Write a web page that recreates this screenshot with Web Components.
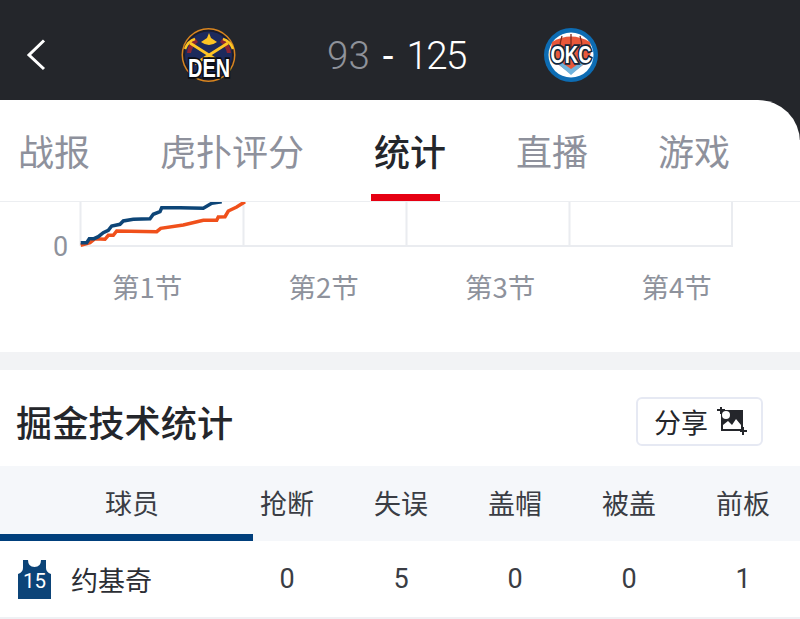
<!DOCTYPE html>
<html lang="zh">
<head>
<meta charset="utf-8">
<title>统计</title>
<style>
  html, body { margin: 0; padding: 0; background: #fff; }
  body { width: 800px; height: 619px; overflow: hidden; font-family: "Noto Sans CJK SC", "Noto Sans", sans-serif; }
</style>
</head>
<body>
<score-header home="93" away="125"></score-header>
<tab-bar></tab-bar>
<quarter-chart></quarter-chart>
<stats-section title-text="掘金技术统计">
  <player-row number="15" name="约基奇" values="0,5,0,0,1"></player-row>
</stats-section>

<script>
const FONT = '"Noto Sans CJK SC", "Noto Sans", sans-serif';

class ScoreHeader extends HTMLElement {
    constructor() {
        super();
        this.attachShadow({ mode: 'open' });
    }

    connectedCallback() {
        const home = this.getAttribute('home');
        const away = this.getAttribute('away');
        this.shadowRoot.innerHTML = `
      <style>
        :host { display: block; height: 140px; margin-bottom: -40px; background: #24262b; }
        .bar { height: 100px; display: grid; grid-template-columns: 181px 56px 306px 56px; align-items: center; position: relative; }
        .back { position: absolute; left: 26px; top: 39px; display: block; }
        .logo { display: block; margin-top: 14px; overflow: visible; }
        .score { display: flex; justify-content: center; align-items: center; gap: 13px; font: 300 38.500px/44px Roboto, sans-serif; color: #fff; margin: 11px 0 0 13px; }
        .home { color: #8f929a; }
        .dash { font-weight: 400; }
        .away { letter-spacing: -1.5px; }
      </style>
      <div class="bar">
        <svg class="back" width="20" height="32" viewBox="0 0 20 32"><path d="M18 1.5 L3 16 L18 30" fill="none" stroke="#fff" stroke-width="3"/></svg>
        <span></span>
        <svg class="logo" width="56" height="58" viewBox="0 0 56 58">
          <circle cx="27.500" cy="27" r="27" fill="#d9851f"/>
          <circle cx="27.500" cy="27" r="25.500" fill="#1b1d2c"/>
          <circle cx="27.500" cy="27" r="23.500" fill="#1d2a5c"/>
          <path d="M6 25 A22 22 0 0 1 14 10 L17 14 A18 18 0 0 0 10 25Z M50 25 A22 22 0 0 0 42 10 L39 14 A18 18 0 0 1 46 25Z" fill="#8a2433"/>
          <path d="M20 14 L26 10 L28 5 L30 10 L36 14 Q28 20 20 14Z" fill="#fec524"/>
          <path d="M9 15 L42 36 M47 15 L14 36" stroke="#fec524" stroke-width="2.800"/>
          <path d="M4 21 Q7 13 14 11 M52 21 Q49 13 42 11" stroke="#fec524" stroke-width="2.400" fill="none"/>
          <text transform="translate(28 49) scale(.765 1)" text-anchor="middle" font-family="Liberation Sans" font-weight="700" font-size="26" fill="#fff" stroke="#0c0d12" stroke-width="3.500" paint-order="stroke">DEN</text>
        </svg>
        <div class="score"><span class="home">${home}</span><span class="dash">-</span><span class="away">${away}</span></div>
        <svg class="logo" width="56" height="58" viewBox="0 0 56 58">
          <circle cx="28" cy="27" r="27" fill="#0d6cb3"/>
          <circle cx="28" cy="27" r="22.500" fill="#fff"/>
          <path d="M9 14 Q28 3 47 14 Q50 26 44 34 L28 46 L12 34 Q6 26 9 14Z" fill="#e9583a"/>
          <path d="M19 8 Q15 20 19 30 M37 8 Q41 20 37 30 M28 6 V26 M10 19 H46" stroke="#7b2a1e" stroke-width="1.300" fill="none"/>
          <path d="M14 35 L28 47 L42 35 L38 34 L28 41 L18 34Z" fill="#6fb3dd"/>
          <text transform="translate(28 35) scale(.8 1)" text-anchor="middle" font-family="Liberation Sans" font-weight="700" font-size="23" fill="#fff" stroke="#12263c" stroke-width="3.500" paint-order="stroke">OKC</text>
        </svg>
      </div>
    `;
    }
}

class TabBar extends HTMLElement {
    constructor() {
        super();
        this.attachShadow({ mode: 'open' });
    }

    connectedCallback() {
        const tabs = ['战报', '虎扑评分', '统计', '直播', '游戏'];
        this.shadowRoot.innerHTML = `
      <style>
        :host { display: block; position: relative; height: 101px; background: #fff; border-top-right-radius: 42px; font-family: ${FONT}; }
        .tabs { display: flex; gap: 70px; padding-left: 18px; height: 100px; box-sizing: border-box; }
        .tab { font-size: 36px; line-height: 100px; color: #8e919c; position: relative; white-space: nowrap; }
        .tab.on { color: #24262b; font-weight: 500; }
        .tab.on::after { content: ''; position: absolute; left: -3px; right: 6px; top: 94px; height: 7px; background: #e60012; }
      </style>
      <div class="tabs">
        ${tabs.map(t => `<div class="tab${t === '统计' ? ' on' : ''}">${t}</div>`).join('')}
      </div>
    `;
    }
}

class QuarterChart extends HTMLElement {
    constructor() {
        super();
        this.attachShadow({ mode: 'open' });
    }

    connectedCallback() {
        const labels = ['第1节', '第2节', '第3节', '第4节'];
        this.shadowRoot.innerHTML = `
      <style>
        :host { display: block; height: 151px; border-top: 1px solid #eceef1; box-sizing: border-box; font-family: ${FONT}; position: relative; }
        svg { display: block; position: absolute; left: 0; top: 0; }
        .zero { position: absolute; left: 53px; top: 29px; font: 400 27px Roboto, sans-serif; line-height: 32px; color: #8e929c; }
        .labels { position: absolute; left: 59px; top: 65px; display: grid; grid-template-columns: repeat(4, 176.5px); }
        .labels div { text-align: center; font-size: 27.5px; line-height: 38px; color: #8e929c; }
      </style>
      <svg width="800" height="60" viewBox="0 202 800 60">
        <path d="M80.500 201V246 M243.500 201V246 M406.500 201V246 M569.500 201V246 M732 201V246 M80 246H733" stroke="#eaecf0" stroke-width="2" fill="none"/>
        <polyline points="80.7,245.3 90,242.7 95,238.7 105,239.3 108.3,235.3 113.3,235.3 116.7,231 156.7,231.7 160.7,228.3 183.3,225 203.3,220.3 216.7,220.3 218.3,217 225,216.7 228.3,211 236.7,207 245,201.7" fill="none" stroke="#f0501b" stroke-width="3.500"/>
        <polyline points="80.7,242.7 86.7,242.7 89.3,238.7 94,238.7 98.3,236.7 103.3,232.7 108.3,230.3 111.7,226 120,224.3 123.3,221 133.3,219.3 150,218.7 153.3,214.3 160,211.7 161.7,207.7 180,207.7 203.3,208.3 211.7,203.3 221.7,201.7" fill="none" stroke="#0d4577" stroke-width="3.500"/>
      </svg>
      <div class="zero">0</div>
      <div class="labels">${labels.map(l => `<div>${l}</div>`).join('')}</div>
    `;
    }
}

class StatsSection extends HTMLElement {
    constructor() {
        super();
        this.attachShadow({ mode: 'open' });
    }

    connectedCallback() {
        const heads = ['抢断', '失误', '盖帽', '被盖', '前板'];
        this.shadowRoot.innerHTML = `
      <style>
        :host { display: block; border-top: 18px solid #f2f3f5; font-family: ${FONT}; }
        .top { height: 96px; display: flex; align-items: center; justify-content: space-between; padding: 0 37px 0 16px; box-sizing: border-box; }
        h2 { margin: 0; font-size: 36.2px; font-weight: 500; color: #24262b; line-height: 50px; position: relative; top: 3px; }
        .share { width: 127px; height: 49px; box-sizing: border-box; border: 2px solid #e6e9f3; border-radius: 6px; display: flex; align-items: center; justify-content: flex-start; padding-left: 16px; gap: 9px; font-size: 27px; color: #24262b; position: relative; top: 3px; }
        .head { display: grid; grid-template-columns: 230px repeat(5, 114px); height: 75px; background: #f5f7fa; font-size: 27px; color: #3a3d44; align-items: center; text-align: center; position: relative; }
        .head div { margin-top: -2px; }
        .head .first { padding-left: 34px; }
        .head::after { content: ''; position: absolute; left: 0; bottom: 0; width: 253px; height: 7px; background: #003f7c; }
      </style>
      <div class="top">
        <h2>${this.getAttribute('title-text')}</h2>
        <div class="share">分享
          <svg width="30" height="28" viewBox="0 0 30 28">
            <path d="M4 3H26V24H4Z" fill="#24262b"/>
            <circle cx="9" cy="8" r="4" fill="#fff"/>
            <path d="M6 22V18L11 14L15 18L19 12L24 18V22Z" fill="#fff"/>
            <path d="M0 3H8 M4 0V7 M23 24H30 M26 20V28" stroke="#24262b" stroke-width="2"/>
          </svg>
        </div>
      </div>
      <div class="head">
        <div class="first">球员</div>
        ${heads.map(h => `<div>${h}</div>`).join('')}
      </div>
      <slot></slot>
    `;
    }
}

class PlayerRow extends HTMLElement {
    constructor() {
        super();
        this.attachShadow({ mode: 'open' });
    }

    connectedCallback() {
        const values = this.getAttribute('values').split(',');
        this.shadowRoot.innerHTML = `
      <style>
        :host { display: grid; grid-template-columns: 230px repeat(5, 114px); height: 78px; box-sizing: border-box; border-bottom: 2px solid #eff1f4; align-items: center; font-family: ${FONT}; color: #2c2e34; }
        .who { display: flex; align-items: center; gap: 20px; padding-left: 18px; font-size: 27px; }
        .jersey { position: relative; width: 33px; height: 39px; display: block; }
        .jersey svg { display: block; }
        .jersey b { position: absolute; left: 0; right: 0; top: 8px; text-align: center; font: 400 20.500px/26px Roboto, sans-serif; color: #fff; }
        .val { text-align: center; font: 400 27px Roboto, sans-serif; color: #3a3d44; }
      </style>
      <div class="who">
        <span class="jersey">
          <svg width="33" height="39" viewBox="0 0 33 39"><path d="M5 0H10Q10 7 16.500 7Q23 7 23 0H28V8Q28 12 33 14V39H0V14Q5 12 5 8Z" fill="#0c4478"/></svg>
          <b>${this.getAttribute('number')}</b>
        </span>
        <span>${this.getAttribute('name')}</span>
      </div>
      ${values.map(v => `<div class="val">${v}</div>`).join('')}
    `;
    }
}

customElements.define('score-header', ScoreHeader);
customElements.define('tab-bar', TabBar);
customElements.define('quarter-chart', QuarterChart);
customElements.define('stats-section', StatsSection);
customElements.define('player-row', PlayerRow);
</script>
</body>
</html>
